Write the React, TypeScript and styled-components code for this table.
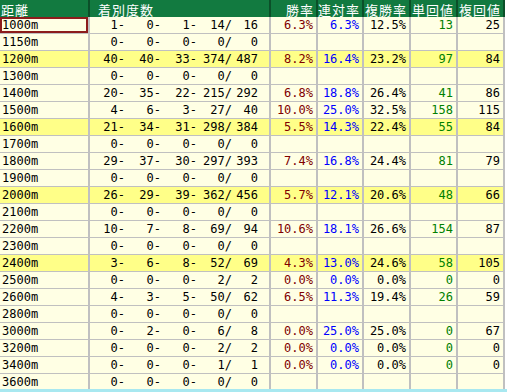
import React from 'react';
import styled, { createGlobalStyle } from 'styled-components';

const GlobalStyle = createGlobalStyle`
  html, body {
    margin: 0;
    padding: 0;
    background: #ffffff;
  }
`;

const colors = {
  header: '#127a40',
  headerLine: '#0b4f29',
  line: '#c0c0c0',
  cell: '#ffffe4',
  highlight: '#ffff88',
  win: '#800000',
  place: '#0000ff',
  show: '#000000',
  tanRecovery: '#008000',
  fukuRecovery: '#000000',
  focus: '#8c1c1c',
  bottom: '#a8e8f0',
};

const COLUMNS = '88px 179px 45px 44px 45px 45px 45px';

const Frame = styled.div`
  width: 507px;
  height: 392px;
  box-sizing: border-box;
  overflow: hidden;
  border-bottom: 3px solid ${colors.bottom};
`;

const Table = styled.div`
  width: 505px;
  display: flex;
  flex-direction: column;
  font-family: 'DejaVu Sans Mono', 'Liberation Mono', monospace;
  font-size: 12px;
`;

const Row = styled.div`
  display: grid;
  grid-template-columns: ${COLUMNS};
  column-gap: 2px;
  padding-right: 2px;
  height: 16px;
  border-bottom: 1px solid ${colors.line};
  background: ${colors.line};
`;

const HeadRow = styled(Row)`
  height: 17px;
  border-bottom: none;
  background: ${colors.headerLine};
`;

const HeadCell = styled.div<{ $align?: 'left' | 'right' }>`
  background: ${colors.header};
  color: #ffffff;
  font-family: 'Noto Sans CJK JP', sans-serif;
  font-size: 13px;
  letter-spacing: 1px;
  line-height: 15px;
  padding-top: 2px;
  text-align: ${(p) => p.$align ?? 'right'};
  padding-right: 2px;
  padding-left: ${(p) => (p.$align === 'left' ? '2px' : '0')};
  white-space: nowrap;
`;

const DistanceHead = styled(HeadCell)`
  padding-left: 1px;
`;

const RecordHead = styled(HeadCell)`
  padding-left: 8px;
`;

const Cell = styled.div<{ $hl?: boolean; $color?: string }>`
  background: ${(p) => (p.$hl ? colors.highlight : colors.cell)};
  color: ${(p) => p.$color ?? '#000000'};
  line-height: 16px;
  text-align: right;
  padding-right: 3px;
  white-space: nowrap;
`;

const DistanceCell = styled(Cell)<{ $focus?: boolean }>`
  text-align: left;
  padding-left: 2px;
  box-shadow: ${(p) => (p.$focus ? `inset 0 0 0 2px ${colors.focus}` : 'none')};
`;

const RecordCell = styled(Cell)`
  display: flex;
  justify-content: flex-end;
  padding-right: 11px;
`;

const Field = styled.span<{ $w: number }>`
  width: ${(p) => p.$w}px;
  text-align: right;
`;

type Data = {
  dist: string;
  rec: [number, number, number, number, number];
  win?: string;
  place?: string;
  show?: string;
  tan?: number;
  fuku?: number;
  hl?: boolean;
};

const zero: Data['rec'] = [0, 0, 0, 0, 0];

const rows: Data[] = [
  { dist: '1000m', rec: [1, 0, 1, 14, 16], win: '6.3%', place: '6.3%', show: '12.5%', tan: 13, fuku: 25 },
  { dist: '1150m', rec: zero },
  { dist: '1200m', rec: [40, 40, 33, 374, 487], win: '8.2%', place: '16.4%', show: '23.2%', tan: 97, fuku: 84, hl: true },
  { dist: '1300m', rec: zero },
  { dist: '1400m', rec: [20, 35, 22, 215, 292], win: '6.8%', place: '18.8%', show: '26.4%', tan: 41, fuku: 86 },
  { dist: '1500m', rec: [4, 6, 3, 27, 40], win: '10.0%', place: '25.0%', show: '32.5%', tan: 158, fuku: 115 },
  { dist: '1600m', rec: [21, 34, 31, 298, 384], win: '5.5%', place: '14.3%', show: '22.4%', tan: 55, fuku: 84, hl: true },
  { dist: '1700m', rec: zero },
  { dist: '1800m', rec: [29, 37, 30, 297, 393], win: '7.4%', place: '16.8%', show: '24.4%', tan: 81, fuku: 79 },
  { dist: '1900m', rec: zero },
  { dist: '2000m', rec: [26, 29, 39, 362, 456], win: '5.7%', place: '12.1%', show: '20.6%', tan: 48, fuku: 66, hl: true },
  { dist: '2100m', rec: zero },
  { dist: '2200m', rec: [10, 7, 8, 69, 94], win: '10.6%', place: '18.1%', show: '26.6%', tan: 154, fuku: 87 },
  { dist: '2300m', rec: zero },
  { dist: '2400m', rec: [3, 6, 8, 52, 69], win: '4.3%', place: '13.0%', show: '24.6%', tan: 58, fuku: 105, hl: true },
  { dist: '2500m', rec: [0, 0, 0, 2, 2], win: '0.0%', place: '0.0%', show: '0.0%', tan: 0, fuku: 0 },
  { dist: '2600m', rec: [4, 3, 5, 50, 62], win: '6.5%', place: '11.3%', show: '19.4%', tan: 26, fuku: 59 },
  { dist: '2800m', rec: zero },
  { dist: '3000m', rec: [0, 2, 0, 6, 8], win: '0.0%', place: '25.0%', show: '25.0%', tan: 0, fuku: 67 },
  { dist: '3200m', rec: [0, 0, 0, 2, 2], win: '0.0%', place: '0.0%', show: '0.0%', tan: 0, fuku: 0 },
  { dist: '3400m', rec: [0, 0, 0, 1, 1], win: '0.0%', place: '0.0%', show: '0.0%', tan: 0, fuku: 0 },
  { dist: '3600m', rec: zero },
];

const fieldWidths = [35, 36, 36, 35, 26];

function Record({ rec }: { rec: Data['rec'] }) {
  const text = [`${rec[0]}-`, `${rec[1]}-`, `${rec[2]}-`, `${rec[3]}/`, `${rec[4]}`];
  return (
    <>
      {text.map((t, i) => (
        <Field key={i} $w={fieldWidths[i]}>
          {t}
        </Field>
      ))}
    </>
  );
}

export default function App() {
  return (
    <Frame>
      <GlobalStyle />
      <Table>
        <HeadRow>
          <DistanceHead $align="left">距離</DistanceHead>
          <RecordHead $align="left">着別度数</RecordHead>
          <HeadCell>勝率</HeadCell>
          <HeadCell>連対率</HeadCell>
          <HeadCell>複勝率</HeadCell>
          <HeadCell>単回値</HeadCell>
          <HeadCell>複回値</HeadCell>
        </HeadRow>
        {rows.map((r, i) => (
          <Row key={r.dist}>
            <DistanceCell $hl={r.hl} $focus={i === 0}>
              {r.dist}
            </DistanceCell>
            <RecordCell $hl={r.hl}>
              <Record rec={r.rec} />
            </RecordCell>
            <Cell $hl={r.hl} $color={colors.win}>{r.win}</Cell>
            <Cell $hl={r.hl} $color={colors.place}>{r.place}</Cell>
            <Cell $hl={r.hl} $color={colors.show}>{r.show}</Cell>
            <Cell $hl={r.hl} $color={colors.tanRecovery}>{r.tan}</Cell>
            <Cell $hl={r.hl} $color={colors.fukuRecovery}>{r.fuku}</Cell>
          </Row>
        ))}
      </Table>
    </Frame>
  );
}
